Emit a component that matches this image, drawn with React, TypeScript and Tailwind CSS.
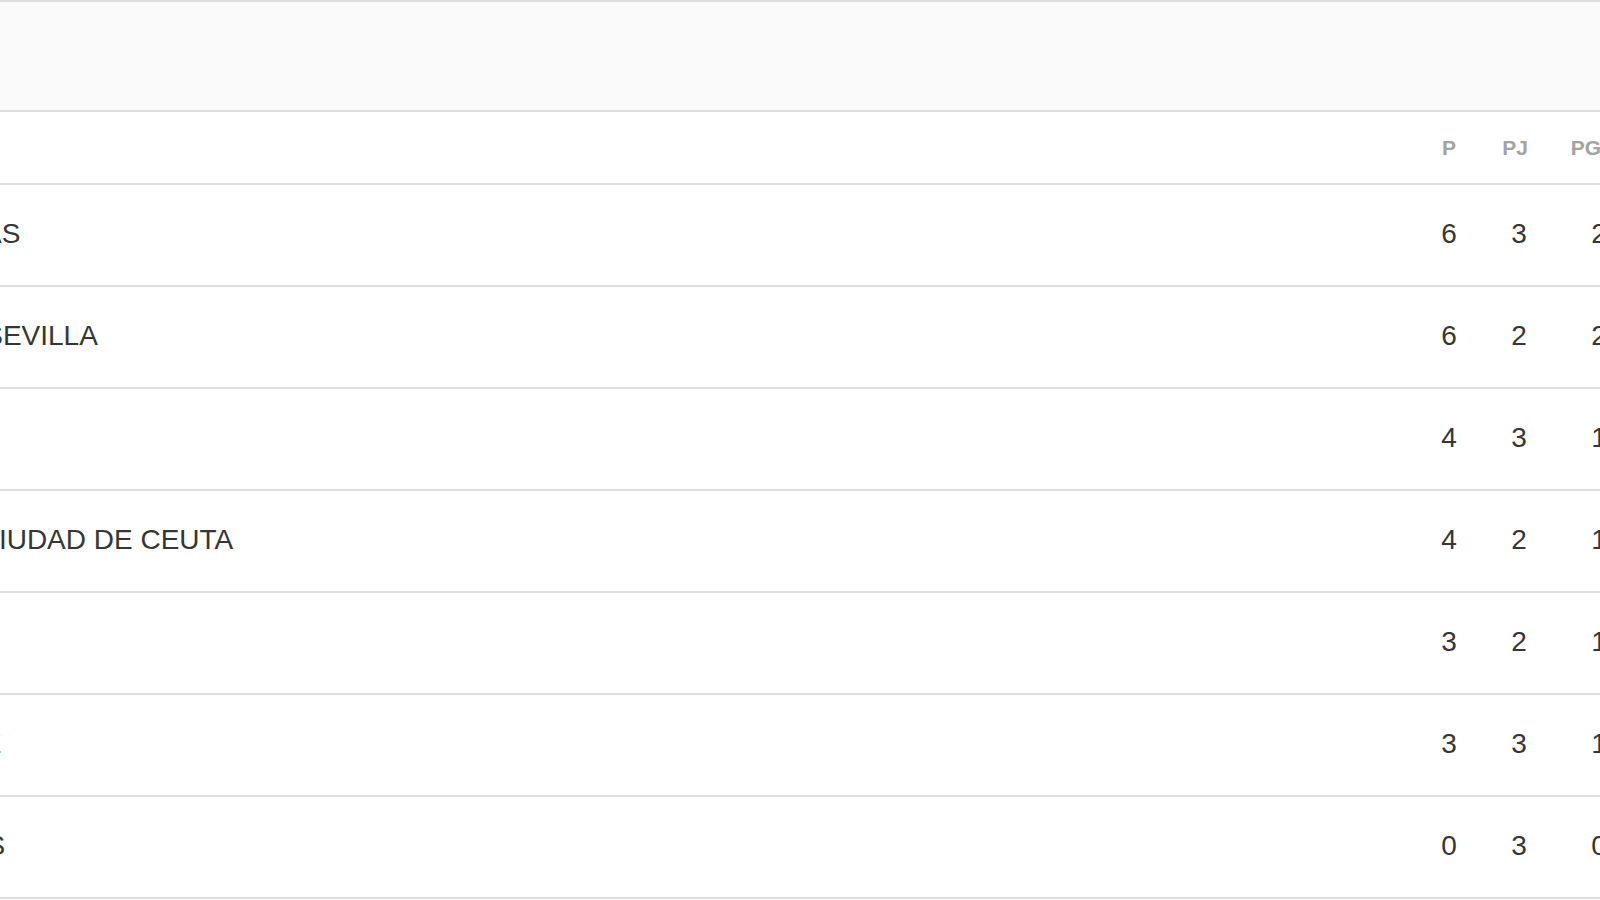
import React from "react"

type Row = {
  name: string
  // how far the name is scrolled out to the left of the visible table
  shift: string
  p: number
  pj: number
  pg: number
  pe: number
  pp: number
}

const ROWS: Row[] = [
  { name: "UD LAS PALMAS", shift: "-ml-[200px]", p: 6, pj: 3, pg: 2, pe: 0, pp: 1 },
  { name: "CD SEVILLA", shift: "-ml-[64px]", p: 6, pj: 2, pg: 2, pe: 0, pp: 0 },
  { name: "CD ALMERÍA", shift: "-ml-[400px]", p: 4, pj: 3, pg: 1, pe: 1, pp: 1 },
  { name: "AD CIUDAD DE CEUTA", shift: "-ml-[68px]", p: 4, pj: 2, pg: 1, pe: 1, pp: 0 },
  { name: "GRANADA CF", shift: "-ml-[400px]", p: 3, pj: 2, pg: 1, pe: 0, pp: 1 },
  { name: "CLUB ALHAURÍN DE LA TORRE", shift: "-ml-[413px]", p: 3, pj: 3, pg: 1, pe: 0, pp: 2 },
  { name: "UD LOS BARRIOS", shift: "-ml-[233px]", p: 0, pj: 3, pg: 0, pe: 0, pp: 3 },
]

function HeadRow() {
  return (
    <div className="flex h-[73px] items-center border-b-2 border-[#dedede] text-[21px] font-bold text-[#a3a3a3]">
      <div className="w-[1414px] shrink-0" />
      <div className="w-[70px] shrink-0 text-center">P</div>
      <div className="w-[70px] shrink-0 pr-2 text-center">PJ</div>
      <div className="w-[90px] shrink-0 pr-[26px] text-center">PG</div>
      <div className="w-[80px] shrink-0 text-center">PE</div>
      <div className="w-[80px] shrink-0 text-center">PP</div>
    </div>
  )
}

function TeamRow({ row }: { row: Row }) {
  return (
    <div className="flex h-[102px] border-b-2 border-[#dedede] pt-[33px] text-[28px] leading-[32px] text-[#363636]">
      <div className="w-[1414px] shrink-0 overflow-hidden">
        <span className={`block whitespace-nowrap ${row.shift}`}>{row.name}</span>
      </div>
      <div className="w-[70px] shrink-0 text-center">{row.p}</div>
      <div className="w-[70px] shrink-0 text-center">{row.pj}</div>
      <div className="w-[90px] shrink-0 text-center">{row.pg}</div>
      <div className="w-[80px] shrink-0 text-center">{row.pe}</div>
      <div className="w-[80px] shrink-0 text-center">{row.pp}</div>
    </div>
  )
}

export default function App() {
  return (
    <div className="h-[900px] w-[1600px] overflow-hidden bg-white font-['Liberation_Sans',Arial,sans-serif]">
      <div className="w-[1804px] border-t-2 border-[#dedede]">
        {/* grey caption bar above the standings */}
        <div className="h-[110px] border-b-2 border-[#dedede] bg-[#fafafa]" />
        <HeadRow />
        {ROWS.map((row) => (
          <TeamRow key={row.name} row={row} />
        ))}
      </div>
    </div>
  )
}
